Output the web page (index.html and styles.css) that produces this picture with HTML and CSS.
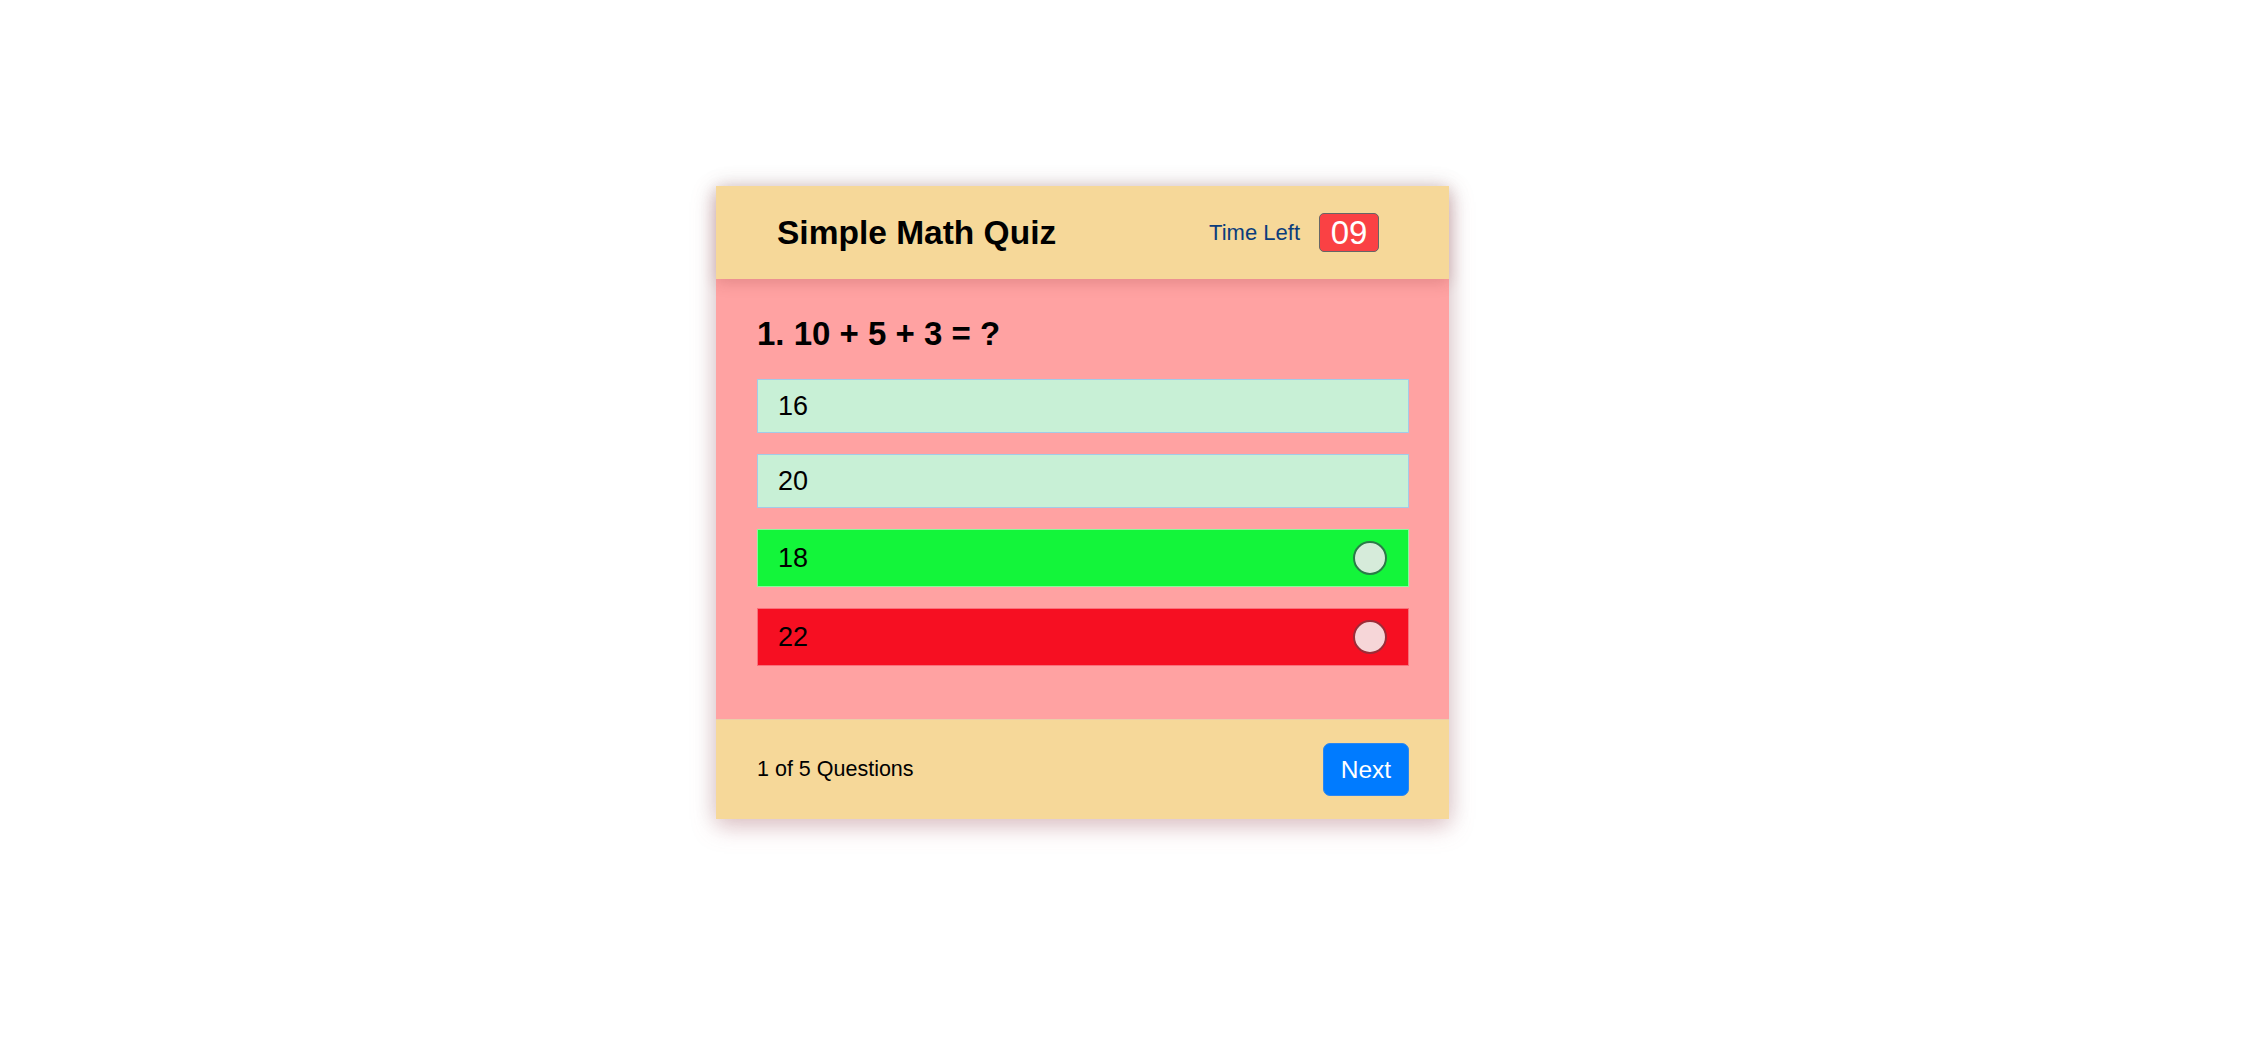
FILE: index.html
```html
<!DOCTYPE html>
<html lang="en">
<head>
<meta charset="utf-8">
<title>Simple Math Quiz</title>
<link rel="stylesheet" href="styles.css">
</head>
<body>
<div class="page">
  <div class="quiz">
    <header class="quiz-header">
      <h1 class="title">Simple Math Quiz</h1>
      <div class="timer">
        <span class="timer-label">Time Left</span>
        <span class="timer-value">09</span>
      </div>
    </header>
    <section class="quiz-body">
      <h2 class="question">1. 10 + 5 + 3 = ?</h2>
      <div class="options">
        <div class="option">16</div>
        <div class="option">20</div>
        <div class="option option-correct">18<span class="mark mark-correct"></span></div>
        <div class="option option-wrong">22<span class="mark mark-wrong"></span></div>
      </div>
    </section>
    <footer class="quiz-footer">
      <span class="counter">1 of 5 Questions</span>
      <button class="next-btn">Next</button>
    </footer>
  </div>
</div>
</body>
</html>
```
FILE: styles.css
```css
* { box-sizing: border-box; }

html, body {
  margin: 0;
  padding: 0;
  background: #ffffff;
  font-family: "Liberation Sans", Arial, Helvetica, sans-serif;
  color: #000;
}

.page {
  min-height: 1044px;
  padding: 186px 0 0 716px;
}

.quiz {
  width: 733px;
  display: flex;
  flex-direction: column;
  box-shadow: 0 8px 22px rgba(190, 110, 120, 0.35), 0 0 22px rgba(0, 0, 0, 0.12);
}

.quiz-header {
  position: relative;
  z-index: 1;
  height: 93px;
  background: #f6d899;
  display: flex;
  align-items: center;
  justify-content: space-between;
  padding: 0 70px 0 61px;
  box-shadow: 0 4px 14px rgba(120, 40, 40, 0.2);
}

.title {
  margin: 0;
  font-size: 33.5px;
  font-weight: bold;
}

.timer {
  display: flex;
  align-items: center;
  gap: 19px;
}

.timer-label {
  font-size: 22px;
  color: #0b3d7c;
}

.timer-value {
  display: block;
  width: 60px;
  height: 39px;
  line-height: 37px;
  text-align: center;
  background: #fa4144;
  color: #fff;
  font-size: 33px;
  border: 1px solid #666;
  border-radius: 5px;
}

.quiz-body {
  background: #ffa2a2;
  padding: 36px 40px 53px 41px;
}

.question {
  margin: 0 0 26px;
  font-size: 33px;
  font-weight: bold;
}

.options {
  display: flex;
  flex-direction: column;
  gap: 21px;
}

.option {
  display: flex;
  align-items: center;
  justify-content: space-between;
  min-height: 54px;
  padding: 11px 21px 11px 20px;
  font-size: 27px;
  line-height: 30px;
  background: #c8f0d6;
  border: 1px solid #a2cbe8;
}

.option-correct {
  background: #13f53a;
  border-color: rgba(255, 255, 255, 0.5);
}

.option-wrong {
  background: #f60f22;
  border-color: rgba(255, 255, 255, 0.4);
}

.mark {
  display: block;
  width: 34px;
  height: 34px;
  border-radius: 50%;
  border: 2px solid;
}

.mark-correct {
  background: #d6ebda;
  border-color: #2b7a48;
}

.mark-wrong {
  background: #f6d6d8;
  border-color: #9b2d38;
}

.quiz-footer {
  height: 100px;
  background: #f6d899;
  border-top: 1px solid #ebcfa9;
  display: flex;
  align-items: center;
  justify-content: space-between;
  padding: 0 40px 0 41px;
}

.counter {
  font-size: 21.5px;
}

.next-btn {
  font-family: inherit;
  font-size: 24.5px;
  line-height: 28px;
  color: #fff;
  background: #007bff;
  border: 1px solid #2a86f0;
  border-radius: 7px;
  width: 86px;
  height: 53px;
  padding: 0;
  cursor: pointer;
}
```
